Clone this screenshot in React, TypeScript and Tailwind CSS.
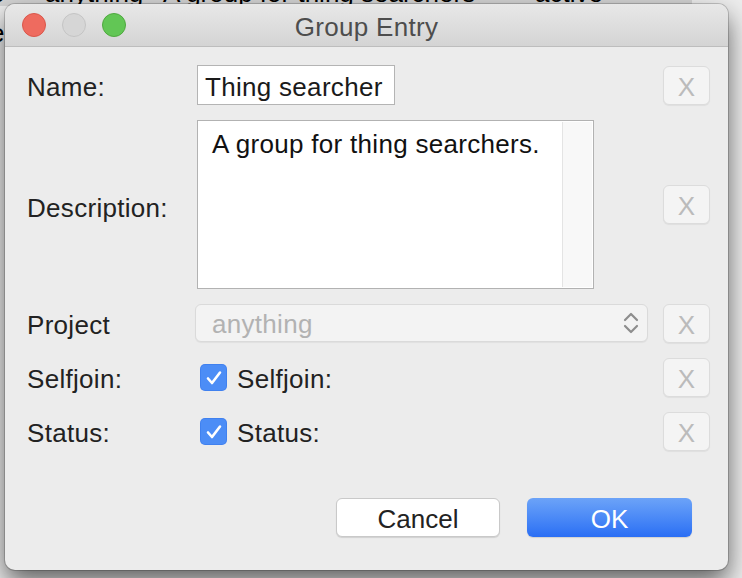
import React from 'react';

const font = { fontFamily: '"Liberation Sans", Arial, sans-serif' };

function ClearButton() {
  return (
    <div className="ml-auto flex h-[39px] w-[47px] shrink-0 items-center justify-center rounded-[6px] border border-[#dcdcdc] bg-[#f4f4f4] pt-[3px] text-[26px] leading-none text-[#bbbbbb] shadow-[0_1px_1px_rgba(0,0,0,0.06)]">
      X
    </div>
  );
}

function Label({ children, w = 'w-[170px]', extra = 'pt-[4px]' }: { children: React.ReactNode; w?: string; extra?: string }) {
  return <div className={`${w} ${extra} shrink-0 text-[26px] tracking-[0.3px] text-[#222]`}>{children}</div>;
}

function Check({ label }: { label: string }) {
  return (
    <div className="flex items-center gap-[10px]">
      <div className="flex h-[27px] w-[27px] items-center justify-center rounded-[5px] bg-[#4c8df6] shadow-[inset_0_0_0_1px_rgba(0,60,200,0.15)]">
        <svg width="20" height="20" viewBox="0 0 20 20" fill="none">
          <path d="M4 10.5 L8 15 L16 4.5" stroke="white" strokeWidth="2.6" strokeLinecap="round" strokeLinejoin="round" />
        </svg>
      </div>
      <span className="pt-[4px] text-[26px] tracking-[0.3px] text-[#222]">{label}</span>
    </div>
  );
}

export default function App() {
  return (
    <div className="relative h-[578px] w-[742px] overflow-hidden bg-[#ededed] pl-[5px] pt-[4px]" style={font}>
      {/* window behind */}
      <div className="absolute left-0 top-[-14px] flex h-[20px] w-[692px] items-end whitespace-nowrap bg-[#d3d3d3] text-[26px] leading-[26px] text-black">
        <span className="ml-[-10px] w-[55px]">e</span>
        <span className="w-[118px]">anything</span>
        <span className="w-[372px]">A group for thing searchers</span>
        <span>active</span>
      </div>
      <div className="absolute left-[-10px] top-[20px] text-[26px] leading-[26px] text-black">e</div>

      <div className="relative z-10 flex h-[566px] w-[723px] flex-col overflow-hidden rounded-[10px] bg-[#ececec] shadow-[0_0_0_1px_rgba(0,0,0,0.18),0_12px_26px_rgba(0,0,0,0.6)]">
        {/* title bar */}
        <div className="relative flex h-[43px] shrink-0 items-center border-b border-[#bdbdbd] bg-gradient-to-b from-[#e8e8e8] to-[#d4d4d4] pl-[17px]">
          <div className="flex gap-[16px]">
            <div className="h-[24px] w-[24px] rounded-full border border-[#d9574b] bg-[#ee6b5f]" />
            <div className="h-[24px] w-[24px] rounded-full border border-[#c4c4c4] bg-[#d6d6d6]" />
            <div className="h-[24px] w-[24px] rounded-full border border-[#4fa83f] bg-[#62c655]" />
          </div>
          <div className="absolute inset-0 flex items-center justify-center pt-[4px] text-[26px] tracking-[0.3px] text-[#4d4d4d]">
            Group Entry
          </div>
        </div>

        {/* form */}
        <div className="flex flex-col pl-[22px] pr-[18px] pt-[18px]">
          <div className="flex h-[40px] items-center">
            <Label>Name:</Label>
            <div className="flex h-[40px] w-[198px] items-center border border-[#b4b4b4] bg-white pl-[7px] pt-[4px] text-[26px] tracking-[0.3px] text-[#1a1a1a]">
              Thing searcher
            </div>
            <ClearButton />
          </div>

          <div className="mt-[15px] flex h-[169px] items-center">
            <Label extra="pt-[8px]">Description:</Label>
            <div className="flex h-[169px] w-[397px] border border-[#b2b2b2] bg-white p-[1px]">
              <div className="flex-1 pl-[13px] pt-[7px] text-[26px] leading-[30px] tracking-[0.3px] text-[#111]">
                A group for thing searchers.
              </div>
              <div className="w-[30px] border-l border-[#e4e4e4] bg-[#f8f8f8]" />
            </div>
            <ClearButton />
          </div>

          <div className="mt-[14px] flex h-[40px] items-center">
            <Label w="w-[168px]">Project</Label>
            <div className="flex h-[38px] w-[453px] items-center justify-between rounded-[6px] border border-[#dadada] bg-[#f3f3f3] pl-[16px] pr-[8px] shadow-[0_1px_1px_rgba(0,0,0,0.05)]">
              <span className="pt-[2px] text-[26px] tracking-[0.3px] text-[#b2b2b2]">anything</span>
              <svg width="16" height="24" viewBox="0 0 16 24" fill="none">
                <path d="M2 9 L8 3 L14 9" stroke="#8d8d8d" strokeWidth="2.2" strokeLinecap="round" strokeLinejoin="round" />
                <path d="M2 15 L8 21 L14 15" stroke="#8d8d8d" strokeWidth="2.2" strokeLinecap="round" strokeLinejoin="round" />
              </svg>
            </div>
            <ClearButton />
          </div>

          <div className="mt-[15px] flex h-[39px] items-center">
            <Label w="w-[173px]">Selfjoin:</Label>
            <Check label="Selfjoin:" />
            <ClearButton />
          </div>

          <div className="mt-[15px] flex h-[39px] items-center">
            <Label w="w-[173px]">Status:</Label>
            <Check label="Status:" />
            <ClearButton />
          </div>

          <div className="mr-[18px] mt-[47px] flex h-[39px] justify-end gap-[27px]">
            <div className="flex w-[164px] items-center justify-center rounded-[6px] border border-[#c9c9c9] bg-white pt-[4px] text-[26px] text-[#222] shadow-[0_1px_1px_rgba(0,0,0,0.12)]">
              Cancel
            </div>
            <div className="flex w-[165px] items-center justify-center rounded-[6px] bg-gradient-to-b from-[#6ca3f8] to-[#2a6ef4] pt-[4px] text-[26px] text-white shadow-[0_1px_1px_rgba(0,0,0,0.12)]">
              OK
            </div>
          </div>
        </div>
      </div>
    </div>
  );
}
